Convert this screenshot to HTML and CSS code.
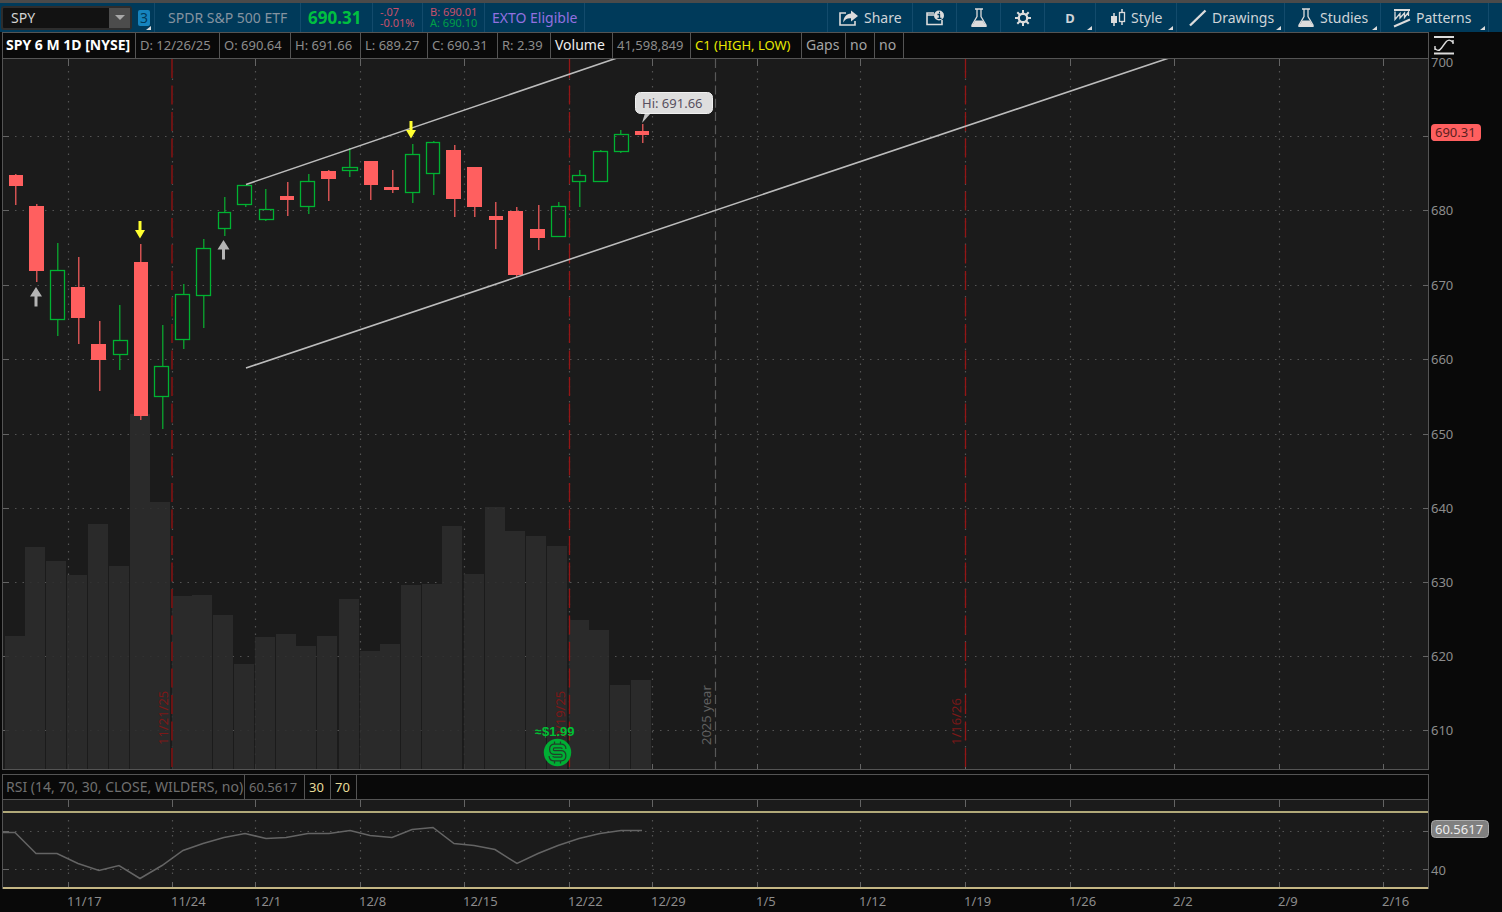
FILE: index.html
```html
<!DOCTYPE html>
<html lang="en">
<head>
<meta charset="utf-8">
<title>SPY Chart</title>
<link rel="stylesheet" href="styles.css">
</head>
<body>
<div class="strip"></div>
<header class="toolbar">
  <div class="cell symbol-cell">
    <div class="combo">
      <input class="combo-input" type="text" value="SPY" aria-label="Symbol">
      <button class="combo-arrow" type="button" aria-label="Symbol list"><svg width="10" height="6" viewBox="0 0 10 6"><path d="M0 0h10L5 5z" fill="#a8a8a8"/></svg></button>
    </div>
    <button class="link-badge" type="button" aria-label="Link group 3">3</button>
    <i class="corner"></i>
  </div>
  <div class="cell name">SPDR S&amp;P 500 ETF</div>
  <div class="cell last">690.31</div>
  <div class="cell pair change"><span>-.07</span><span>-0.01%</span></div>
  <div class="cell pair quote"><span class="bid">B: 690.01</span><span class="ask">A: 690.10</span></div>
  <div class="cell exto">EXTO Eligible</div>
  <div class="spacer"></div>
  <button class="cell tool share" type="button">
    <svg width="20" height="16" viewBox="0 0 20 16"><path d="M7 3H1v12h15v-4" fill="none" stroke="#dcdcdc" stroke-width="1.6"/><path d="M12 0.500l7 5.500-7 5.500V8.300C8 8 6 9.500 4.200 12.500 4.500 7 7.500 3.800 12 3.500z" fill="#dcdcdc"/></svg>
    <span>Share</span>
  </button>
  <button class="cell tool square" type="button" aria-label="Calendar">
    <svg width="20" height="16" viewBox="0 0 20 16"><path d="M9 3H2v11.500h15V10M2 5h7" fill="none" stroke="#dcdcdc" stroke-width="1.600"/><circle cx="14" cy="5.500" r="5" fill="#dcdcdc"/><path d="M12.500 4.500H14.500V8M12.500 8.300h4M14 2.500h1" stroke="#00395a" stroke-width="1.300" fill="none"/></svg>
  </button>
  <button class="cell tool square" type="button" aria-label="Edit studies">
    <svg width="18" height="20" viewBox="0 0 18 20"><path d="M5 1h8M7 1.500v7L2 17h14l-5-8.500v-7" fill="none" stroke="#dcdcdc" stroke-width="1.300"/><path d="M5.500 12.500h7l4.500 6.500H1z" fill="#dcdcdc"/></svg>
  </button>
  <button class="cell tool square" type="button" aria-label="Settings">
    <svg width="18" height="18" viewBox="0 0 18 18"><circle cx="9" cy="9" r="4.200" fill="none" stroke="#dcdcdc" stroke-width="2.400"/><path d="M9 1v4M9 13v4M1 9h4M13 9h4M3.300 3.300l3 3M11.700 11.700l3 3M14.700 3.300l-3 3M6.300 11.700l-3 3" stroke="#dcdcdc" stroke-width="2"/><circle cx="9" cy="9" r="2.800" fill="#00395a"/></svg>
  </button>
  <button class="cell tool day" type="button"><b>D</b><i class="corner"></i></button>
  <button class="cell tool style" type="button">
    <svg width="16" height="18" viewBox="0 0 16 18"><path d="M4 4v13" stroke="#dcdcdc" stroke-width="1.500"/><rect x="1" y="7" width="6" height="7" fill="#dcdcdc"/><path d="M12 0v3M12 13v3" stroke="#dcdcdc" stroke-width="1.500"/><rect x="9.500" y="3.500" width="5" height="9" fill="none" stroke="#dcdcdc" stroke-width="1.300"/></svg>
    <span>Style</span><i class="corner"></i>
  </button>
  <button class="cell tool drawings" type="button">
    <svg width="20" height="18" viewBox="0 0 20 18"><path d="M2 16.500L17.500 1.500" stroke="#dcdcdc" stroke-width="2.400"/></svg>
    <span>Drawings</span><i class="corner"></i>
  </button>
  <button class="cell tool studies" type="button">
    <svg width="18" height="20" viewBox="0 0 18 20"><path d="M5 1h8M7 1.500v7L2 17h14l-5-8.500v-7" fill="none" stroke="#dcdcdc" stroke-width="1.300"/><path d="M5.500 12.500h7l4.500 6.500H1z" fill="#dcdcdc"/></svg>
    <span>Studies</span><i class="corner"></i>
  </button>
  <button class="cell tool patterns" type="button">
    <svg width="18" height="20" viewBox="0 0 18 20"><path d="M1 2h16" stroke="#dcdcdc" stroke-width="2"/><path d="M2 3.500v8l5-6v4.500l4.500-5v4.500L15.500 4v4" fill="none" stroke="#dcdcdc" stroke-width="1.300"/><path d="M1 18.500L17 11.500" stroke="#dcdcdc" stroke-width="2"/></svg>
    <span>Patterns</span><i class="corner"></i>
  </button>
  <div class="toolbar-end"></div>
</header>

<main class="workspace">
  <section class="panel price-panel">
    <div class="box">
      <div class="info">
        <span class="title">SPY 6 M 1D [NYSE]</span><span class="date">D: 12/26/25</span><span class="open">O: 690.64</span><span class="price">H: 691.66</span><span class="low">L: 689.27</span><span class="price">C: 690.31</span><span class="range">R: 2.39</span><span class="volume">Volume</span><span class="count">41,598,849</span><span class="study">C1 (HIGH, LOW)</span><span class="gaps">Gaps</span><span class="flag">no</span><span class="flag">no</span>
      </div>
      <svg class="plot" id="price" role="img" aria-label="SPY daily candles and volume"></svg>
    </div>
    <div class="axis">
      <button class="axis-button" type="button" aria-label="Axis scale"><svg width="20" height="20" viewBox="0 0 20 20"><path d="M0 2h20M0 18.500h20" stroke="#dcdcdc" stroke-width="2"/><path d="M0.500 12.500c2 4 5 3.500 7 0.500l4-5.500c2-3 5-3.500 8 0.500M19 5v4M1 11v4" fill="none" stroke="#dcdcdc" stroke-width="1.400"/></svg></button>
      <svg class="scale" id="price-axis" role="img" aria-label="Price scale"></svg>
    </div>
  </section>
  <section class="panel rsi-panel">
    <div class="box">
      <div class="info rsi-info">
        <span class="rsi-name">RSI (14, 70, 30, CLOSE, WILDERS, no)</span><span class="rsi-value">60.5617</span><span class="level">30</span><span class="level">70</span>
      </div>
      <svg class="plot" id="rsi" role="img" aria-label="RSI"></svg>
    </div>
    <div class="axis"><svg class="scale" id="rsi-axis" role="img" aria-label="RSI scale"></svg></div>
  </section>
  <svg class="dates" id="dates" role="img" aria-label="Dates"></svg>
</main>
<script src="chart.js"></script>
</body>
</html>
```

FILE: styles.css
```css
* { box-sizing: border-box; }

body {
  margin: 0;
  min-height: 100vh;
  display: flex;
  flex-direction: column;
  background: #090909;
  color: #8c8c8c;
  font: 14px/18px "Noto Sans", "Open Sans", sans-serif;
}

button, input { font: inherit; color: inherit; border: 0; margin: 0; padding: 0; background: none; }
svg { display: block; }
text { font: 13px "Noto Sans", "Open Sans", sans-serif; }

.strip { height: 3px; background: #4a4a4a; flex: none; }

.toolbar { display: flex; flex: none; height: 29px; background: #003a5a; white-space: nowrap; }
.cell { position: relative; display: flex; align-items: center; flex: none; border-left: 1px solid #134b6c; }
.spacer { flex: 1; border-left: 1px solid #134b6c; }
.toolbar-end { width: 14px; border-left: 1px solid #134b6c; }

.symbol-cell { width: 154px; padding-left: 1px; gap: 6px; border: 0; }
.combo { display: flex; width: 131px; height: 24px; border: 2px solid #2d2d2d; border-radius: 3px; background: #121212; }
.combo-input { flex: 1; min-width: 0; padding-left: 8px; color: #d4d4d4; outline: 0; }
.combo-arrow { width: 21px; background: #4c4c4c; display: flex; align-items: center; justify-content: center; }
.link-badge { width: 12px; height: 16px; border-radius: 2px; background: #1684bd; color: #003a5a; line-height: 16px; }
.corner { position: absolute; right: 3px; bottom: 2px; border-left: 5px solid transparent; border-bottom: 4px solid #dcdcdc; }

.name { width: 146px; padding-left: 13px; color: #8593a0; }
.last { width: 72px; padding-left: 7px; color: #00c040; font-size: 17px; font-weight: 700; }
.pair { flex-direction: column; align-items: flex-start; justify-content: center; padding-left: 7px; padding-bottom: 1px; font-size: 11px; line-height: 11px; }
.change { width: 50px; color: #c8506a; }
.quote { width: 62px; }
.bid { color: #c8506a; }
.ask { color: #00a047; }
.exto { width: 100px; padding-left: 7px; color: #9370e0; }

.tool { color: #cfd4d8; justify-content: flex-start; gap: 5px; padding-left: 11px; cursor: pointer; }
.share { width: 85px; }
.square { width: 44px; padding: 0; justify-content: center; }
.day { width: 51px; padding: 0; justify-content: center; font-size: 13px; }
.style { width: 81px; padding-left: 14px; }
.drawings { width: 108px; gap: 4px; }
.studies { width: 96px; padding-left: 12px; }
.patterns { width: 108px; padding-left: 12px; }

.workspace { flex: 1; display: flex; flex-direction: column; padding-left: 2px; }
.panel { display: flex; }
.price-panel { flex: 1; margin-bottom: 4px; }
.rsi-panel { flex: none; }
.box { flex: 1; min-width: 0; display: flex; flex-direction: column; background: #1b1b1b; border: 1px solid #545454; }
.rsi-panel .box { border-bottom: 0; }
.axis { width: 73px; display: flex; flex-direction: column; }
.axis-button { flex: none; width: 20px; height: 26px; margin-left: 5px; display: flex; align-items: center; }

.info { display: flex; flex: none; height: 26px; background: #090909; border-bottom: 1px solid #545454; white-space: nowrap; font-size: 13px; line-height: 24px; }
.info span { flex: none; padding-left: 4px; border-right: 1px solid #545454; }
.info .title { width: 133px; padding-left: 3px; color: #fff; font-size: 14px; font-weight: 700; }
.info .date { width: 84px; }
.info .open { width: 71px; }
.info .price { width: 70px; }
.info .low { width: 67px; }
.info .range { width: 53px; }
.info .volume { width: 62px; color: #eee; font-size: 14px; }
.info .count { width: 78px; }
.info .study { width: 111px; color: #e8e800; }
.info .gaps { width: 44px; color: #a4a4a4; font-size: 14px; }
.info .flag { width: 29px; color: #a4a4a4; font-size: 14px; }
.info .rsi-name { width: 242px; color: #707070; padding-left: 3px; font-size: 14px; }
.info .rsi-value { width: 60px; color: #707070; }
.info .level { width: 26px; color: #e8dc98; }
.rsi-info { height: 25px; }

.plot { flex: 1 1 0; width: 100%; height: 0; min-height: 200px; }
.rsi-panel .plot { flex: none; height: 89px; min-height: 0; }
.scale { flex: 1 1 0; width: 100%; height: 0; min-height: 0; overflow: visible; }
.dates { width: 100%; height: 23px; flex: none; }

.label { fill: #8c8c8c; }
.rotated-red { fill: #7c1818; }
.rotated-grey { fill: #606060; }
.dividend { font: 700 13px "Liberation Sans", Arial, sans-serif; fill: #00c035; }
.approx { font-size: 12px; }
```

FILE: chart.js
```js
// Marks are stored in design units and scaled to the size of each panel.
var LEFT = 3, WIDTH = 1425;
var WEEKS = [[68, '11/17'], [172, '11/24'], [255, '12/1'], [360, '12/8'], [464, '12/15'], [569, '12/22'], [652, '12/29'], [757, '1/5'], [860, '1/12'], [965, '1/19'], [1070, '1/26'], [1174, '2/2'], [1279, '2/9'], [1383, '2/16']];
var PRICES = [[136, 690], [210, 680], [285, 670], [359, 660], [434, 650], [508, 640], [582, 630], [656, 620], [730, 610]];

// direction, wick x, body left, body width, high, open/close top, open/close bottom, low
var CANDLES = [
  ['r', 15, 9, 14, 174, 175, 186, 205], ['r', 36, 29, 15, 204, 206, 271, 282], ['g', 57, 50, 15, 243, 270, 320, 336],
  ['r', 78, 71, 14, 257, 287, 318, 344], ['r', 99, 91, 15, 321, 344, 360, 391], ['g', 119, 113, 15, 305, 340, 355, 370],
  ['r', 140, 134, 14, 244, 262, 416, 420], ['g', 162, 154, 15, 325, 366, 397, 429], ['g', 183, 175, 15, 284, 294, 340, 349],
  ['g', 203, 196, 15, 239, 248, 296, 328], ['g', 224, 218, 13, 197, 212, 229, 236], ['g', 245, 237, 15, 185, 185, 205, 207],
  ['g', 265, 259, 15, 189, 209, 220, 221], ['r', 287, 280, 14, 182, 196, 200, 216], ['g', 308, 300, 15, 174, 181, 207, 214],
  ['r', 328, 321, 15, 170, 171, 179, 201], ['g', 349, 342, 16, 148, 167, 171, 177], ['r', 370, 364, 14, 161, 161, 185, 200],
  ['r', 392, 384, 15, 170, 187, 190, 193], ['g', 412, 405, 15, 144, 154, 193, 203], ['g', 433, 426, 14, 141, 142, 174, 195],
  ['r', 454, 446, 15, 145, 150, 199, 217], ['r', 474, 467, 15, 167, 167, 207, 217], ['r', 495, 489, 14, 202, 216, 220, 249],
  ['r', 516, 508, 15, 207, 211, 275, 277], ['r', 538, 530, 15, 205, 229, 238, 250], ['g', 558, 551, 15, 202, 206, 237, 237],
  ['g', 579, 572, 14, 170, 175, 182, 207], ['g', 600, 593, 15, 150, 151, 182, 182], ['g', 620, 614, 15, 130, 134, 152, 153],
  ['r', 642, 635, 14, 124, 131, 135, 143]
];

var VOLUME = [[5, 636], [25, 547], [46, 561], [67, 575], [88, 524], [109, 566], [130, 414], [150, 502], [172, 596], [192, 595], [213, 615], [234, 664], [255, 637], [276, 634], [296, 646], [317, 636], [339, 599], [360, 651], [380, 644], [401, 585], [422, 584], [442, 526], [464, 574], [485, 507], [505, 531], [526, 536], [547, 546], [569, 620], [589, 630], [610, 685], [631, 680]];

var RSI = [[3, 832], [15, 832], [36, 853], [57, 853], [78, 863], [99, 870], [119, 865], [140, 878], [162, 865], [183, 850], [203, 843], [224, 837], [245, 833], [266, 838], [286, 837], [308, 833], [329, 833], [350, 830], [370, 835], [392, 837], [412, 829], [433, 827], [454, 843], [474, 845], [495, 849], [517, 863], [538, 853], [558, 845], [579, 838], [600, 833], [621, 830], [642, 830]];

function scaler(origin, from, to) {
  return function (v) { return (v - origin) * to / from; };
}
function rect(x, y, w, h, fill) {
  return '<rect x="' + Math.round(x) + '" y="' + Math.round(y) + '" width="' + w + '" height="' + Math.round(h) + '" fill="' + fill + '"/>';
}
function dashed(x1, y1, x2, y2, stroke, dash, width) {
  return '<line x1="' + x1 + '" y1="' + y1 + '" x2="' + x2 + '" y2="' + y2 + '" stroke="' + stroke + '" stroke-width="' + (width || 1) + '" stroke-dasharray="' + dash + '"/>';
}
function text(x, y, str, cls) {
  return '<text class="' + (cls || 'label') + '" x="' + x + '" y="' + y + '">' + str + '</text>';
}
function rotated(x, y, str, cls) {
  return '<text class="' + cls + '" transform="translate(' + x + ' ' + y + ') rotate(-90)">' + str + '</text>';
}

function grid(w, h, X, rows, firstDot) {
  var s = '';
  WEEKS.forEach(function (d) {
    var x = Math.round(X(d[0]));
    s += rect(x, 0, 1, 7, '#646464') + rect(x, h - 5, 1, 5, '#646464');
    s += dashed(x + .5, firstDot, x + .5, h - 8, '#545454', '1.5 6', 1.2);
  });
  rows.forEach(function (r) {
    var y = Math.round(r);
    s += rect(0, y, 6, 1, '#646464') + rect(w - 5, y, 5, 1, '#646464');
    s += dashed(12, y + .5, w - 12, y + .5, '#545454', '1.5 6', 1.2);
  });
  return s;
}

function arrow(x, y, up) {
  var d = up ? 'M0 0l6 9.500H1.500V19.500H-1.500V9.500H-6z' : 'M-1.500 0h3V9H5L0 17.500-5 9h3.500z';
  return '<path transform="translate(' + x + ' ' + y + ')" d="' + d + '" fill="' + (up ? '#b4b4b4' : '#ffff30') + '"/>';
}

function drawPrice() {
  var svg = document.getElementById('price'), w = svg.clientWidth, h = svg.clientHeight;
  var X = scaler(LEFT, WIDTH, w), Y = scaler(59, 710, h);
  var s = grid(w, h, X, PRICES.map(function (p) { return Y(p[0]); }), 12);
  VOLUME.forEach(function (v, i) {
    var next = VOLUME[i + 1] ? VOLUME[i + 1][0] : 652;
    var bw = Math.min(20, next - v[0]) * w / WIDTH;
    s += '<rect x="' + X(v[0]) + '" y="' + Y(v[1]) + '" width="' + bw + '" height="' + (h - Y(v[1])) + '" fill="#2d2d2d" fill-opacity="0.85"/>';
  });
  s += dashed(X(172), 0, X(172), h, '#6c1414', '19 7.5', 2);
  s += dashed(X(569) + .5, 0, X(569) + .5, h, '#941616', '19 7.5', 1.3);
  s += dashed(X(965) + .5, 0, X(965) + .5, h, '#941616', '19 7.5', 1.3);
  s += dashed(X(715) + .5, 0, X(715) + .5, h, '#585858', '9 4.25', 1.2);
  CANDLES.forEach(function (c) {
    var red = c[0] === 'r', wick = red ? '#d25252' : '#0c942c';
    var x = X(c[1]), l = Math.round(X(c[2])), bw = Math.round(c[3] * w / WIDTH);
    var top = Math.round(Y(c[5])), bh = Math.round(Y(c[6])) - top;
    s += rect(x, Y(c[4]), 1.5, top - Y(c[4]), wick) + rect(x, Y(c[6]), 1.5, Y(c[7]) - Y(c[6]), wick);
    s += red ? rect(l, top, bw, bh, '#ff5f5f')
      : '<rect x="' + (l + .5) + '" y="' + (top + .5) + '" width="' + (bw - 1) + '" height="' + (bh - 1) + '" fill="none" stroke="#00b232" stroke-width="1.3"/>';
  });
  s += '<path d="M' + X(246) + ' ' + Y(184.5) + 'L' + X(617) + ' ' + Y(58) + 'M' + X(246) + ' ' + Y(368) + 'L' + X(1169) + ' ' + Y(58) + '" stroke="#bcbcbc" stroke-width="1.6"/>';
  s += arrow(X(140), Y(221), false) + arrow(X(411), Y(121), false) + arrow(X(36), Y(287), true) + arrow(X(223.5), Y(240), true);
  s += rotated(X(168), h - 24, '11/21/25', 'rotated-red') + rotated(X(565), h - 24, '12/19/25', 'rotated-red') + rotated(X(961), h - 24, '1/16/26', 'rotated-red') + rotated(X(711), h - 24, '2025 year', 'rotated-grey');

  // High-of-range callout
  s += '<g transform="translate(' + X(635) + ' ' + Y(92) + ')"><path d="M10 21L7 31 16 21z" fill="#c4c4c4"/><rect x=".5" y=".5" width="77" height="21" rx="5" fill="#dedede" stroke="#f0f0f0"/><text x="7" y="16" fill="#585060">Hi: 691.66</text></g>';

  // Dividend marker
  var bend = 'M6.500-3.500Q6.500-6.500 3.500-6.500H-3Q-6-6.500-6-3.200T-3 0H3.500Q6.500 0 6.500 3.200T3.500 6.500H-3Q-6.500 6.500-6.500 3.500';
  s += text(X(535), h - 33, '≈', 'dividend approx') + text(X(542), h - 33, '$1.99', 'dividend');
  s += '<g transform="translate(' + X(557.5) + ' ' + (h - 16.5) + ')" fill="none"><circle r="13.7" fill="#00ae34"/>' +
    '<path d="M-3-11V-7M3-11V-7M-3 7V11M3 7V11" stroke="#20402a" stroke-width="1.3"/>' +
    '<path d="' + bend + '" stroke="#20402a" stroke-width="5"/>' +
    '<path d="' + bend + '" stroke="#00ae34" stroke-width="2.6"/></g>';
  svg.innerHTML = s;

  var a = text(2, 9, '700');
  PRICES.forEach(function (p) { a += text(2, Math.round(Y(p[0])) + 6, p[1]); });
  a += '<g transform="translate(2 ' + Y(124) + ')"><rect x="0" y="1" width="50" height="17" rx="4" fill="#ff5f5f"/><text x="4" y="14" fill="#5c2020">690.31</text></g>';
  document.getElementById('price-axis').innerHTML = a;
}

function drawRsi() {
  var svg = document.getElementById('rsi'), w = svg.clientWidth, h = svg.clientHeight;
  var X = scaler(LEFT, WIDTH, w), Y = scaler(800, 89, h);
  var s = grid(w, h - 2, X, [Y(831), Y(869)], 20);
  s += rect(0, Y(811), w, 2, '#b0a878') + rect(0, Y(887), w, 2, '#c4b684');
  s += '<polyline fill="none" stroke="#646464" stroke-width="1.5" points="' + RSI.map(function (p) { return X(p[0]) + ',' + (Y(p[1]) + .5); }).join(' ') + '"/>';
  svg.innerHTML = s;
  document.getElementById('rsi-axis').innerHTML = text(2, 101, '40') +
    '<g transform="translate(2 46)"><rect x=".5" y=".5" width="57" height="17" rx="4" fill="#808080" stroke="#a8a8a8"/><text x="4" y="14" fill="#ececec">60.5617</text></g>';
  document.getElementById('dates').innerHTML = WEEKS.map(function (d) { return text(Math.round(X(d[0])), 17, d[1]); }).join('');
}

function draw() { drawPrice(); drawRsi(); }
window.addEventListener('resize', draw);
draw();
```
